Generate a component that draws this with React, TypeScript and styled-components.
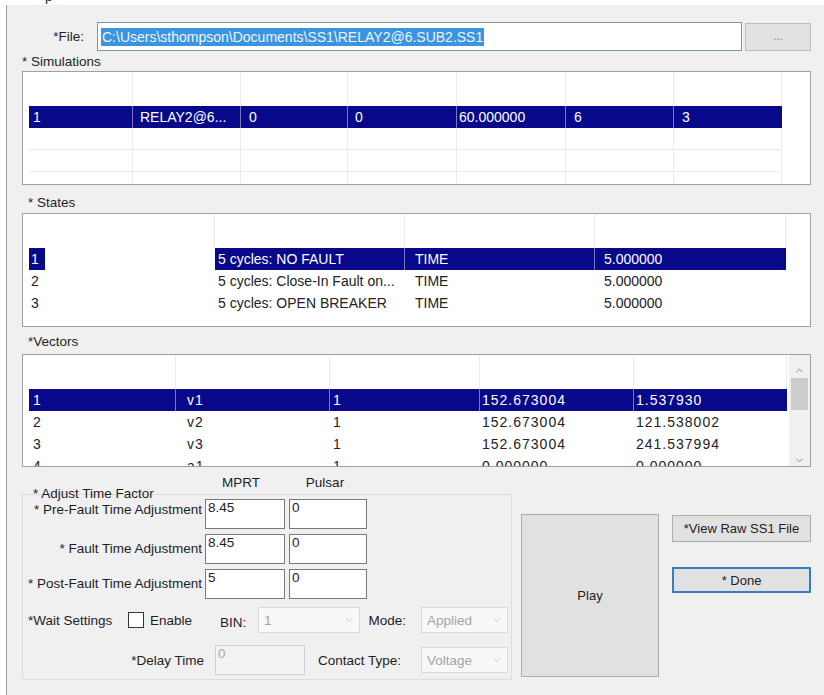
import React from 'react';
import styled, { createGlobalStyle } from 'styled-components';
import { ChevronDown, ChevronUp } from 'lucide-react';

type Column = { width: number; pad: number };

const filePath = 'C:\\Users\\sthompson\\Documents\\SS1\\RELAY2@6.SUB2.SS1';

const simColumns: Column[] = [
  { width: 104, pad: 4 },
  { width: 108, pad: 7 },
  { width: 107, pad: 8 },
  { width: 109, pad: 7 },
  { width: 109, pad: 2 },
  { width: 108, pad: 8 },
  { width: 108, pad: 8 },
];

const simRows = [['1', 'RELAY2@6...', '0', '0', '60.000000', '6', '3']];

const stateColumns: Column[] = [
  { width: 186, pad: 2 },
  { width: 190, pad: 3 },
  { width: 190, pad: 10 },
  { width: 191, pad: 9 },
];

const stateRows = [
  ['1', '5 cycles: NO FAULT', 'TIME', '5.000000'],
  ['2', '5 cycles: Close-In Fault on...', 'TIME', '5.000000'],
  ['3', '5 cycles: OPEN BREAKER', 'TIME', '5.000000'],
];

const vectorColumns: Column[] = [
  { width: 147, pad: 4 },
  { width: 154, pad: 11 },
  { width: 150, pad: 3 },
  { width: 154, pad: 2 },
  { width: 153, pad: 2 },
];

const vectorRows = [
  ['1', 'v1', '1', '152.673004', '1.537930'],
  ['2', 'v2', '1', '152.673004', '121.538002'],
  ['3', 'v3', '1', '152.673004', '241.537994'],
  ['4', 'a1', '1', '0.000000', '0.000000'],
];

const DataGrid: React.FC<{
  columns: Column[];
  rows: string[][];
  height: number;
  gap: number;
  blankRows?: number;
  markFirst?: boolean;
  spacing?: number;
  scroll?: boolean;
}> = ({ columns, rows, height, gap, blankRows = 0, markFirst, spacing = 0, scroll }) => (
  <GridFrame $height={height} $gap={gap}>
    <GridBody $spacing={spacing}>
      <HeadRow>
        {columns.map((col, c) => (
          <HeadCell key={c} $width={col.width} />
        ))}
      </HeadRow>
      {rows.map((row, r) => {
        const selected = r === 0;
        return (
          <DataRow key={r}>
            {row.map((value, c) => {
              const markOnly = selected && markFirst && c === 0;
              return (
                <Cell
                  key={c}
                  $width={columns[c].width}
                  $pad={markOnly ? 0 : columns[c].pad}
                  $selected={selected && !markOnly}
                >
                  {markOnly ? <Mark>{value}</Mark> : value}
                </Cell>
              );
            })}
          </DataRow>
        );
      })}
      {Array.from({ length: blankRows }).map((_, r) => (
        <DataRow key={`blank-${r}`}>
          {columns.map((col, c) => (
            <BlankCell key={c} $width={col.width} />
          ))}
        </DataRow>
      ))}
    </GridBody>
    {scroll && (
      <ScrollTrack>
        <ScrollArrow $height={21}>
          <ChevronUp size={11} strokeWidth={1.6} />
        </ScrollArrow>
        <ScrollThumb />
        <ScrollArrow $height={16} $push>
          <ChevronDown size={11} strokeWidth={1.6} />
        </ScrollArrow>
      </ScrollTrack>
    )}
  </GridFrame>
);

const Dropdown: React.FC<{ value: string; width: number }> = ({ value, width }) => (
  <DropBox $width={width}>
    <span>{value}</span>
    <ChevronDown size={12} strokeWidth={1.4} color='#b8b8b8' />
  </DropBox>
);

export default function App() {
  return (
    <>
      <GlobalStyle />
      <TitleStrip>
        <TitleText>p</TitleText>
      </TitleStrip>
      <Window>
        <FileRow>
          <FileLabel>*File:</FileLabel>
          <PathBox>
            <PathSelection>{filePath}</PathSelection>
          </PathBox>
          <BrowseButton>...</BrowseButton>
        </FileRow>

        <SectionLabel $top={3} $indent={0}>* Simulations</SectionLabel>
        <DataGrid columns={simColumns} rows={simRows} height={114} gap={1} blankRows={3} />

        <SectionLabel $top={10} $indent={6}>* States</SectionLabel>
        <DataGrid columns={stateColumns} rows={stateRows} height={114} gap={2} markFirst />

        <SectionLabel $top={7} $indent={6}>*Vectors</SectionLabel>
        <DataGrid columns={vectorColumns} rows={vectorRows} height={113} gap={4} spacing={1} scroll />

        <BottomArea>
          <TimePanel>
            <ColumnHeads>
              <ColumnHead $offset={183}>MPRT</ColumnHead>
              <ColumnHead $offset={12}>Pulsar</ColumnHead>
            </ColumnHeads>
            <GroupBox>
              <GroupCaption>* Adjust Time Factor</GroupCaption>
              <AdjustRow>
                <AdjustLabel $raised>* Pre-Fault Time Adjustment</AdjustLabel>
                <ValueBox $width={80}>8.45</ValueBox>
                <ValueBox $width={78} $gap={4}>0</ValueBox>
              </AdjustRow>
              <AdjustRow>
                <AdjustLabel>* Fault Time Adjustment</AdjustLabel>
                <ValueBox $width={80}>8.45</ValueBox>
                <ValueBox $width={78} $gap={4}>0</ValueBox>
              </AdjustRow>
              <AdjustRow>
                <AdjustLabel>* Post-Fault Time Adjustment</AdjustLabel>
                <ValueBox $width={80}>5</ValueBox>
                <ValueBox $width={78} $gap={4}>0</ValueBox>
              </AdjustRow>

              <WaitRow>
                <InlineText $width={100} $gap={5}>*Wait Settings</InlineText>
                <CheckBox />
                <InlineText $width={70} $gap={6}>Enable</InlineText>
                <InlineText $width={38} $low>BIN:</InlineText>
                <Dropdown value='1' width={102} />
                <InlineText $width={61} $right={15}>Mode:</InlineText>
                <Dropdown value='Applied' width={87} />
              </WaitRow>

              <DelayRow>
                <InlineText $width={192} $right={11}>*Delay Time</InlineText>
                <ValueBox $width={90} $disabled>0</ValueBox>
                <InlineText $width={116} $right={20}>Contact Type:</InlineText>
                <Dropdown value='Voltage' width={87} />
              </DelayRow>
            </GroupBox>
          </TimePanel>

          <PlayButton>Play</PlayButton>

          <ActionColumn>
            <ActionButton $height={27}>*View Raw SS1 File</ActionButton>
            <ActionButton $height={26} $focused>* Done</ActionButton>
          </ActionColumn>
        </BottomArea>
      </Window>
    </>
  );
}

const GlobalStyle = createGlobalStyle`
  html, body {
    margin: 0;
    padding: 0;
    background: #ffffff;
  }
  body {
    font-family: 'Liberation Sans', Arial, sans-serif;
    font-size: 13.5px;
    color: #1e1e1e;
  }
  * {
    box-sizing: border-box;
  }
`;

const TitleStrip = styled.div`
  height: 5px;
  overflow: hidden;
  padding-left: 45px;
`;

const TitleText = styled.div`
  font-size: 13.5px;
  line-height: 13px;
  margin-top: -10px;
  color: #222;
`;

const Window = styled.div`
  height: 690px;
  margin-left: 6px;
  border-left: 1px solid #9c9c9c;
  background: #f0f0f0;
  padding: 17px 13px 0 15px;
  overflow: hidden;
`;

const FileRow = styled.div`
  display: flex;
  align-items: center;
  height: 29px;
`;

const FileLabel = styled.div`
  width: 62px;
  margin-right: 13px;
  text-align: right;
`;

const PathBox = styled.div`
  flex: none;
  display: flex;
  align-items: center;
  width: 645px;
  height: 29px;
  padding: 0 3px;
  border: 1px solid #7a98ad;
  background: #ffffff;
  font-size: 14px;
`;

const PathSelection = styled.span`
  padding: 0 1px;
  line-height: 18px;
  background: #3b94e0;
  color: #eef6ff;
  white-space: nowrap;
`;

const BrowseButton = styled.div`
  flex: none;
  width: 66px;
  height: 28px;
  margin-left: 3px;
  padding-top: 6px;
  border: 1px solid #bdbdbd;
  background: #e1e1e1;
  color: #777;
  font-size: 11px;
  text-align: center;
`;

const SectionLabel = styled.div<{ $top: number; $indent: number }>`
  margin-top: ${p => p.$top}px;
  padding-left: ${p => p.$indent}px;
  line-height: 16px;
`;

const GridFrame = styled.div<{ $height: number; $gap: number }>`
  display: flex;
  height: ${p => p.$height}px;
  margin-top: ${p => p.$gap}px;
  border: 1px solid #a0a0a0;
  background: #ffffff;
  overflow: hidden;
`;

const GridBody = styled.div<{ $spacing: number }>`
  flex: 1;
  padding-left: 6px;
  font-size: 14px;
  letter-spacing: ${p => p.$spacing}px;
  color: #222;
  overflow: hidden;
`;

const HeadRow = styled.div`
  display: flex;
  height: 34px;
`;

const HeadCell = styled.div<{ $width: number }>`
  flex: none;
  width: ${p => p.$width}px;
  border-right: 1px solid #ebebeb;
`;

const DataRow = styled.div`
  display: flex;
  height: 22px;
`;

const Cell = styled.div<{ $width: number; $pad: number; $selected: boolean }>`
  flex: none;
  display: flex;
  width: ${p => p.$width}px;
  padding-left: ${p => p.$pad}px;
  line-height: 22px;
  white-space: nowrap;
  overflow: hidden;
  background: ${p => (p.$selected ? '#08088a' : 'transparent')};
  color: ${p => (p.$selected ? '#ffffff' : 'inherit')};
  border-right: 1px solid ${p => (p.$selected ? 'rgba(255, 255, 255, 0.45)' : 'transparent')};

  &:last-child {
    border-right-color: transparent;
  }
`;

const Mark = styled.span`
  padding: 0 6px 0 2px;
  background: #08088a;
  color: #ffffff;
`;

const BlankCell = styled.div<{ $width: number }>`
  flex: none;
  width: ${p => p.$width}px;
  border-right: 1px solid #ebebeb;
  border-bottom: 1px solid #ebebeb;
`;

const ScrollTrack = styled.div`
  flex: none;
  display: flex;
  flex-direction: column;
  align-items: center;
  width: 21px;
  background: #f0f0f0;
`;

const ScrollArrow = styled.div<{ $height: number; $push?: boolean }>`
  display: flex;
  justify-content: center;
  align-items: flex-end;
  height: ${p => p.$height}px;
  margin-top: ${p => (p.$push ? 'auto' : '0')};
  color: #606060;
`;

const ScrollThumb = styled.div`
  width: 17px;
  height: 32px;
  margin-top: 2px;
  background: #cdcdcd;
`;

const BottomArea = styled.div`
  display: flex;
  align-items: flex-start;
`;

const TimePanel = styled.div`
  flex: none;
  width: 490px;
`;

const ColumnHeads = styled.div`
  display: flex;
  height: 19px;
  margin-top: 8px;
`;

const ColumnHead = styled.div<{ $offset: number }>`
  width: 72px;
  margin-left: ${p => p.$offset}px;
  line-height: 16px;
  text-align: center;
`;

const GroupBox = styled.div`
  position: relative;
  height: 186px;
  padding-top: 4px;
  border: 1px solid #dcdcdc;
`;

const GroupCaption = styled.div`
  position: absolute;
  top: -6px;
  left: 10px;
  line-height: 10px;
  white-space: nowrap;
`;

const AdjustRow = styled.div`
  display: flex;
  align-items: center;
  height: 30px;

  & + & {
    margin-top: 5px;
  }
`;

const AdjustLabel = styled.div<{ $raised?: boolean }>`
  flex: none;
  width: 182px;
  padding-right: 3px;
  text-align: right;
  white-space: nowrap;
  align-self: ${p => (p.$raised ? 'flex-start' : 'center')};
  margin-top: ${p => (p.$raised ? '4px' : '0')};
  line-height: ${p => (p.$raised ? '13px' : '16px')};
`;

const ValueBox = styled.div<{ $width: number; $gap?: number; $disabled?: boolean }>`
  flex: none;
  width: ${p => p.$width}px;
  height: 30px;
  margin-left: ${p => p.$gap ?? 0}px;
  padding-left: 2px;
  line-height: 16px;
  border: 1px solid ${p => (p.$disabled ? '#d0d0d0' : '#7a7a7a')};
  background: ${p => (p.$disabled ? '#f3f3f3' : '#ffffff')};
  color: ${p => (p.$disabled ? '#a8a8a8' : '#1e1e1e')};
`;

const WaitRow = styled.div`
  display: flex;
  align-items: center;
  height: 28px;
  margin-top: 7px;
`;

const DelayRow = styled.div`
  display: flex;
  align-items: center;
  height: 30px;
  margin-top: 11px;
`;

const InlineText = styled.div<{ $width: number; $gap?: number; $right?: number; $low?: boolean }>`
  flex: none;
  width: ${p => p.$width}px;
  margin-left: ${p => p.$gap ?? 0}px;
  padding-right: ${p => p.$right ?? 0}px;
  padding-top: ${p => (p.$low ? '5px' : '0')};
  text-align: ${p => (p.$right ? 'right' : 'left')};
  white-space: nowrap;
`;

const CheckBox = styled.div`
  flex: none;
  width: 16px;
  height: 16px;
  border: 1px solid #333333;
  background: #ffffff;
`;

const DropBox = styled.div<{ $width: number }>`
  flex: none;
  display: flex;
  align-items: center;
  justify-content: space-between;
  width: ${p => p.$width}px;
  height: 26px;
  padding: 0 4px 0 5px;
  border: 1px solid #dadada;
  background: #f8f8f8;
  color: #a4a4a4;
`;

const PlayButton = styled.button`
  flex: none;
  width: 138px;
  height: 163px;
  margin: 47px 0 0 9px;
  padding: 0;
  border: 1px solid #adadad;
  background: #e1e1e1;
  font-family: 'Liberation Sans', Arial, sans-serif;
  font-size: 13px;
  color: #222;
`;

const ActionColumn = styled.div`
  flex: none;
  display: flex;
  flex-direction: column;
  gap: 25px;
  width: 139px;
  margin: 48px 0 0 13px;
`;

const ActionButton = styled.button<{ $height: number; $focused?: boolean }>`
  height: ${p => p.$height}px;
  padding: 0;
  border: ${p => (p.$focused ? '2px solid #3a7cc0' : '1px solid #adadad')};
  background: #e1e1e1;
  font-family: 'Liberation Sans', Arial, sans-serif;
  font-size: 13px;
  color: #222;
  white-space: nowrap;
`;
